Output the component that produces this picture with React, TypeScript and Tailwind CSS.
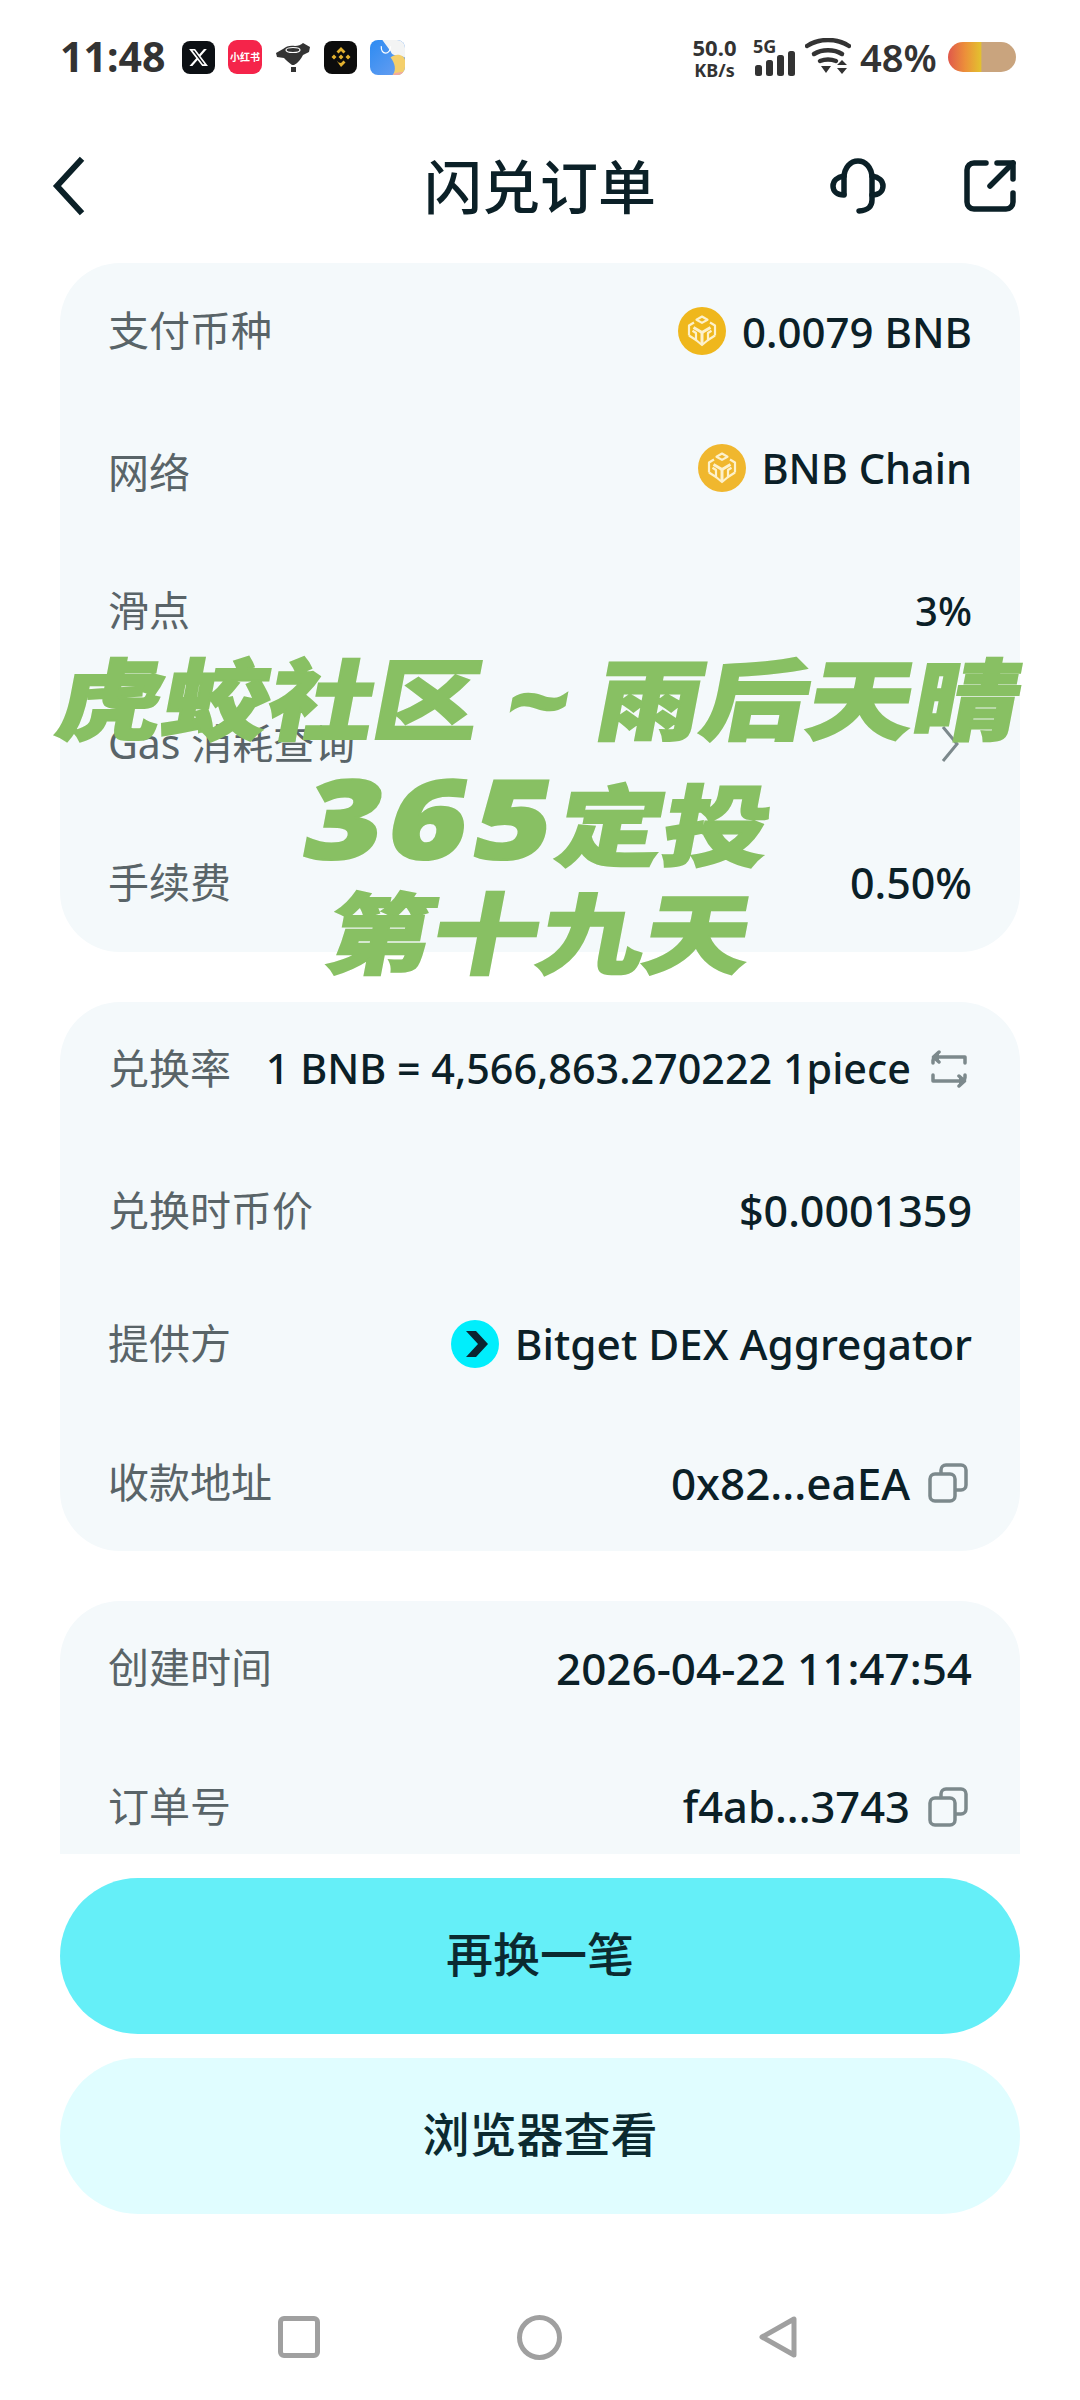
import React from 'react';

const font = '[font-family:"Noto_Sans","Noto_Sans_CJK_SC",sans-serif]';

function BnbIcon({ fill = '#efb71c' }: { fill?: string }) {
    return (
        <svg viewBox="0 0 48 48" className="w-12 h-12 shrink-0">
            <circle cx="24" cy="24" r="24" fill={fill} />
            <g fill="none" stroke="#fdf1cb" strokeWidth="2.2" strokeLinejoin="round">
                <path d="M24 9.500l5.500 3.200-5.500 3.200-5.500-3.200z" />
                <path d="M16 15.500l-5 3v10" />
                <path d="M32 15.500l5 3v10" />
                <path d="M15.500 20.500L24 25.500l8.500-5" strokeWidth="3" />
                <path d="M24 25.500v12" strokeWidth="3" />
                <path d="M11 28.500l7 4.500v-7l-3.500-2.200" />
                <path d="M37 28.500l-7 4.500v-7l3.500-2.200" />
                <path d="M18 33l6 5 6-5" />
            </g>
        </svg>
    );
}

function CopyIcon() {
    return (
        <svg viewBox="0 0 40 40" className="w-10 h-10 shrink-0 mr-[4px]" fill="none" stroke="#7c898c" strokeWidth="3.500" strokeLinejoin="round">
            <rect x="2" y="11" width="25" height="27" rx="5" />
            <path d="M13 11V7a5 5 0 0 1 5-5h15a5 5 0 0 1 5 5v15a5 5 0 0 1-5 5h-6" />
        </svg>
    );
}

function SwapIcon() {
    return (
        <svg viewBox="0 0 38 38" className="w-[38px] h-[38px] shrink-0 mr-[4px]" fill="none" stroke="#7c898c" strokeWidth="3.500" strokeLinecap="round" strokeLinejoin="round">
            <path d="M3 13V10.500a4 4 0 0 1 4-3.500h28v6" />
            <path d="M9 2L3.500 7 9 12" fill="#7c898c" />
            <path d="M35 25v2.500a4 4 0 0 1-4 3.500H3v-6" />
            <path d="M29 26l5.500 5-5.500 5" fill="#7c898c" />
        </svg>
    );
}

function BitgetIcon() {
    return (
        <svg viewBox="0 0 48 48" className="w-12 h-12 shrink-0">
            <circle cx="24" cy="24" r="24" fill="#00eefc" />
            <path d="M15 11h10l12 13-12 13H15l12-13z" fill="#0b2430" />
        </svg>
    );
}

function Row({ label, className, labelClass = '', children }: { label: string; className: string; labelClass?: string; children: React.ReactNode }) {
    return (
        <div className={`flex items-center justify-between h-[90px] ${className}`}>
            <span className={`text-[41px] text-[#596468] ${labelClass}`}>{label}</span>
            <div className="flex items-center text-[42px] font-medium text-[#0b2027]">{children}</div>
        </div>
    );
}

function StatusBar() {
    return (
        <div className="h-[114px] flex items-center justify-between pl-[60px] pr-[64px] text-[#333333]">
            <div className="flex items-center">
                <span className="text-[41px] font-bold w-[122px]">11:48</span>
                <div className="flex items-center gap-[13px]">
                    <div className="w-[33px] h-[33px] rounded-[8px] bg-[#0c1014] flex items-center justify-center">
                        <svg viewBox="0 0 24 24" className="w-[21px] h-[21px]" fill="#ffffff">
                            <path d="M18.244 2.250h3.308l-7.227 8.260 8.502 11.240H16.170l-5.214-6.817L4.990 21.750H1.680l7.730-8.835L1.254 2.250H8.080l4.713 6.231zm-1.161 17.520h1.833L7.084 4.126H5.117z" />
                        </svg>
                    </div>
                    <div className="w-[34px] h-[34px] rounded-[9px] bg-[#f5244a] flex items-center justify-center overflow-hidden">
                        <span className="text-[10px] font-bold leading-none text-white whitespace-nowrap">小红书</span>
                    </div>
                    <svg viewBox="0 0 36 34" className="w-[36px] h-[34px]" fill="#333333">
                        <path d="M1 13L8 9C11 6 16 5 20 6C23 6 26 5 28 3L35 7L34 12L28 15C26 19 23 23 19 25L17 25C14 23 11 20 9 18L2 17Z" />
                        <ellipse cx="18" cy="10" rx="7" ry="2.500" fill="none" stroke="#ffffff" strokeWidth="1.200" />
                        <rect x="16" y="27" width="5" height="5" />
                    </svg>
                    <div className="w-[33px] h-[33px] rounded-[8px] bg-[#0c0c0c] flex items-center justify-center">
                        <svg viewBox="0 0 24 24" className="w-[24px] h-[24px]" fill="#e3b12f">
                            <path d="M12 2l4.500 4.500-2 2L12 6 9.500 8.500l-2-2zM5 9.500l2.500 2.500L5 14.500 2.500 12zM19 9.500l2.500 2.500-2.500 2.500-2.500-2.500zM12 9.500l2.500 2.500-2.500 2.500L9.500 12zM7.500 15.500l2 2L12 18l2.500-2.500 2 2L12 22z" />
                        </svg>
                    </div>
                    <svg viewBox="0 0 34 34" className="w-[35px] h-[35px] rounded-[8px]">
                        <defs>
                            <linearGradient id="store" x1="0" y1="0" x2="1" y2="1">
                                <stop offset="0" stopColor="#2c8bf2" />
                                <stop offset="1" stopColor="#6c9ff0" />
                            </linearGradient>
                        </defs>
                        <rect width="34" height="34" fill="url(#store)" />
                        <path d="M12 0h22v17c-6-3-12 0-14-6z" fill="#f3f4f4" />
                        <path d="M20 17c6-5 14-2 14 3v14H22c4-5 2-12-2-17z" fill="#f4cf6b" />
                        <path d="M22 34c2-3 8-3 12-3v3z" fill="#f3a9a0" />
                        <path d="M11 6c-1 9 9 9 9 0" fill="none" stroke="#ffffff" strokeWidth="1.200" />
                    </svg>
                </div>
            </div>
            <div className="flex items-center">
                <div className="flex flex-col items-center font-bold leading-none w-[47px] mr-[15px]">
                    <span className="text-[22px]">50.0</span>
                    <span className="text-[18px] mt-[3px]">KB/s</span>
                </div>
                <div className="relative w-[42px] h-[38px] mr-[10px]">
                    <span className="absolute left-0 -top-[1px] text-[18px] font-bold leading-none">5G</span>
                    <svg viewBox="0 0 42 38" className="w-[42px] h-[38px]" fill="#333333">
                        <rect x="2" y="27" width="7" height="11" rx="2.500" />
                        <rect x="13" y="22" width="7" height="16" rx="2.500" />
                        <rect x="24" y="17" width="7" height="21" rx="2.500" />
                        <rect x="35" y="13" width="7" height="25" rx="2.500" />
                    </svg>
                </div>
                <svg viewBox="0 0 46 38" className="w-[46px] h-[38px] mr-[9px]">
                    <g fill="none" stroke="#333333" strokeWidth="4.500" strokeLinecap="round">
                        <path d="M2 8c12-8 30-8 42 0" />
                        <path d="M9 16c8-5 20-5 28 0" />
                        <path d="M15 23c5-2 11-2 16 0" />
                    </g>
                    <path d="M16 28h10l-5 7zM32 27l5-5 5 5zM32 30h10l-5 6z" fill="#333333" />
                </svg>
                <span className="text-[38px] font-semibold w-[88px]">48%</span>
                <div className="w-[68px] h-[30px] rounded-full bg-[linear-gradient(90deg,#e0584b_0%,#ec8f3a_25%,#e3c02f_48%,#c9a47e_50%)]" />
            </div>
        </div>
    );
}

export default function App() {
    return (
        <div className={`relative flex flex-col w-[1080px] h-[2400px] bg-white overflow-hidden ${font}`}>
            <StatusBar />

            {/* Header */}
            <div className="relative h-[144px] flex items-center justify-between pl-[50px] pr-[64px]">
                <svg viewBox="0 0 40 60" className="w-[40px] h-[60px]" fill="none" stroke="#0b2027" strokeWidth="6" strokeLinecap="square">
                    <path d="M30 5L7 30l23 25" />
                </svg>
                <span className="absolute left-0 right-0 text-center text-[58px] font-medium text-[#0b2027] pointer-events-none">闪兑订单</span>
                <div className="flex items-center gap-[78px]">
                    <svg viewBox="0 0 56 56" className="w-[56px] h-[56px]" fill="none" stroke="#0b2027" strokeWidth="5.500" strokeLinecap="round" strokeLinejoin="round">
                        <path d="M14 36V20C14 9 21 3 28 3s14 6 14 17v22c0 7-4 10-13 11" />
                        <path d="M14 18C7 19 3 23 3 28s4 9 11 9" />
                        <path d="M42 18c7 1 11 5 11 10s-4 9-11 9" />
                    </svg>
                    <svg viewBox="0 0 52 52" className="w-[52px] h-[52px]" fill="none" stroke="#0b2027" strokeWidth="5.500" strokeLinecap="round" strokeLinejoin="round">
                        <path d="M22 3H10a7 7 0 0 0-7 7v32a7 7 0 0 0 7 7h32a7 7 0 0 0 7-7V33" />
                        <path d="M26 26L49 3" />
                        <path d="M33 3h16v16" />
                    </svg>
                </div>
            </div>

            {/* Scrolling content, cut off above the buttons */}
            <div className="h-[1596px] overflow-hidden px-[60px] pt-[5px] flex flex-col gap-[50px]">
                <div className="bg-[#f4f9fb] rounded-[60px] px-[48px] pt-[23px] pb-[24px]">
                    <Row label="支付币种" className="">
                        <BnbIcon />
                        <span className="ml-[16px]">0.0079 BNB</span>
                    </Row>
                    <Row label="网络" className="mt-[47px]" labelClass="pt-[9px]">
                        <BnbIcon fill="#f0b72e" />
                        <span className="ml-[15px] text-[41.500px]">BNB Chain</span>
                    </Row>
                    <Row label="滑点" className="mt-[53px]">
                        <span className="text-[40px]">3%</span>
                    </Row>
                    <Row label="Gas 消耗查询" className="mt-[43px]">
                        <svg viewBox="0 0 20 40" className="w-[20px] h-[40px] mr-[12px]" fill="none" stroke="#7c898c" strokeWidth="3">
                            <path d="M3 3l14 17L3 37" />
                        </svg>
                    </Row>
                    <Row label="手续费" className="mt-[49px]">
                        <span className="text-[43px]">0.50%</span>
                    </Row>
                </div>

                <div className="bg-[#f4f9fb] rounded-[60px] px-[48px] pt-[22px] pb-[23px]">
                    <Row label="兑换率" className="">
                        <span className="text-[41.300px]">1 BNB = 4,566,863.270222 1piece</span>
                        <span className="ml-[19px]"><SwapIcon /></span>
                    </Row>
                    <Row label="兑换时币价" className="mt-[52px]">
                        <span className="text-[43px]">$0.0001359</span>
                    </Row>
                    <Row label="提供方" className="mt-[43px]">
                        <BitgetIcon />
                        <span className="ml-[16px] text-[42.400px]">Bitget DEX Aggregator</span>
                    </Row>
                    <Row label="收款地址" className="mt-[49px]">
                        <span className="text-[44px]">0x82...eaEA</span>
                        <span className="ml-[18px]"><CopyIcon /></span>
                    </Row>
                </div>

                <div className="bg-[#f4f9fb] rounded-t-[60px] px-[48px] pt-[22px] pb-[80px]">
                    <Row label="创建时间" className="">
                        <span className="text-[44px]">2026-04-22 11:47:54</span>
                    </Row>
                    <Row label="订单号" className="mt-[49px]">
                        <span className="text-[43.500px]">f4ab...3743</span>
                        <span className="ml-[18px]"><CopyIcon /></span>
                    </Row>
                </div>
            </div>

            {/* Buttons */}
            <div className="flex flex-col gap-[24px] px-[60px] pt-[24px]">
                <button className="h-[156px] rounded-full bg-[#65eff8] pb-[3px] text-[47px] font-medium text-[#0b2a30]">再换一笔</button>
                <button className="h-[156px] rounded-full bg-[#e0fdff] pb-[3px] text-[47px] font-medium text-[#0b2a30]">浏览器查看</button>
            </div>

            {/* Navigation bar */}
            <div className="flex-1 flex items-center justify-center gap-[197px] pt-[60px] pr-[5px]">
                <div className="w-[42px] h-[42px] rounded-[6px] border-[5px] border-[#a0a0a0]" />
                <div className="w-[45px] h-[45px] rounded-full border-[5px] border-[#a0a0a0]" />
                <svg viewBox="0 0 38 42" className="w-[38px] h-[42px]" fill="none" stroke="#a0a0a0" strokeWidth="5" strokeLinejoin="round">
                    <path d="M35 3v36L3 21z" />
                </svg>
            </div>

            {/* Watermark over the page */}
            <div className="absolute left-0 right-0 top-[641px] flex flex-col items-center text-[#88c063] text-[88px] leading-[117px] font-black whitespace-nowrap pointer-events-none">
                <span className="h-[117px] scale-x-[1.2] -skew-x-[9deg] [-webkit-text-stroke:2px_#88c063]">虎蛟社区 ~ 雨后天晴</span>
                <span className="h-[117px] scale-x-[1.2] -skew-x-[9deg] [-webkit-text-stroke:2px_#88c063]">
                    <span className="text-[110px] tracking-[6px]">365</span>定投
                </span>
                <span className="h-[117px] scale-x-[1.2] -skew-x-[9deg] [-webkit-text-stroke:2px_#88c063]">第十九天</span>
            </div>
        </div>
    );
}
